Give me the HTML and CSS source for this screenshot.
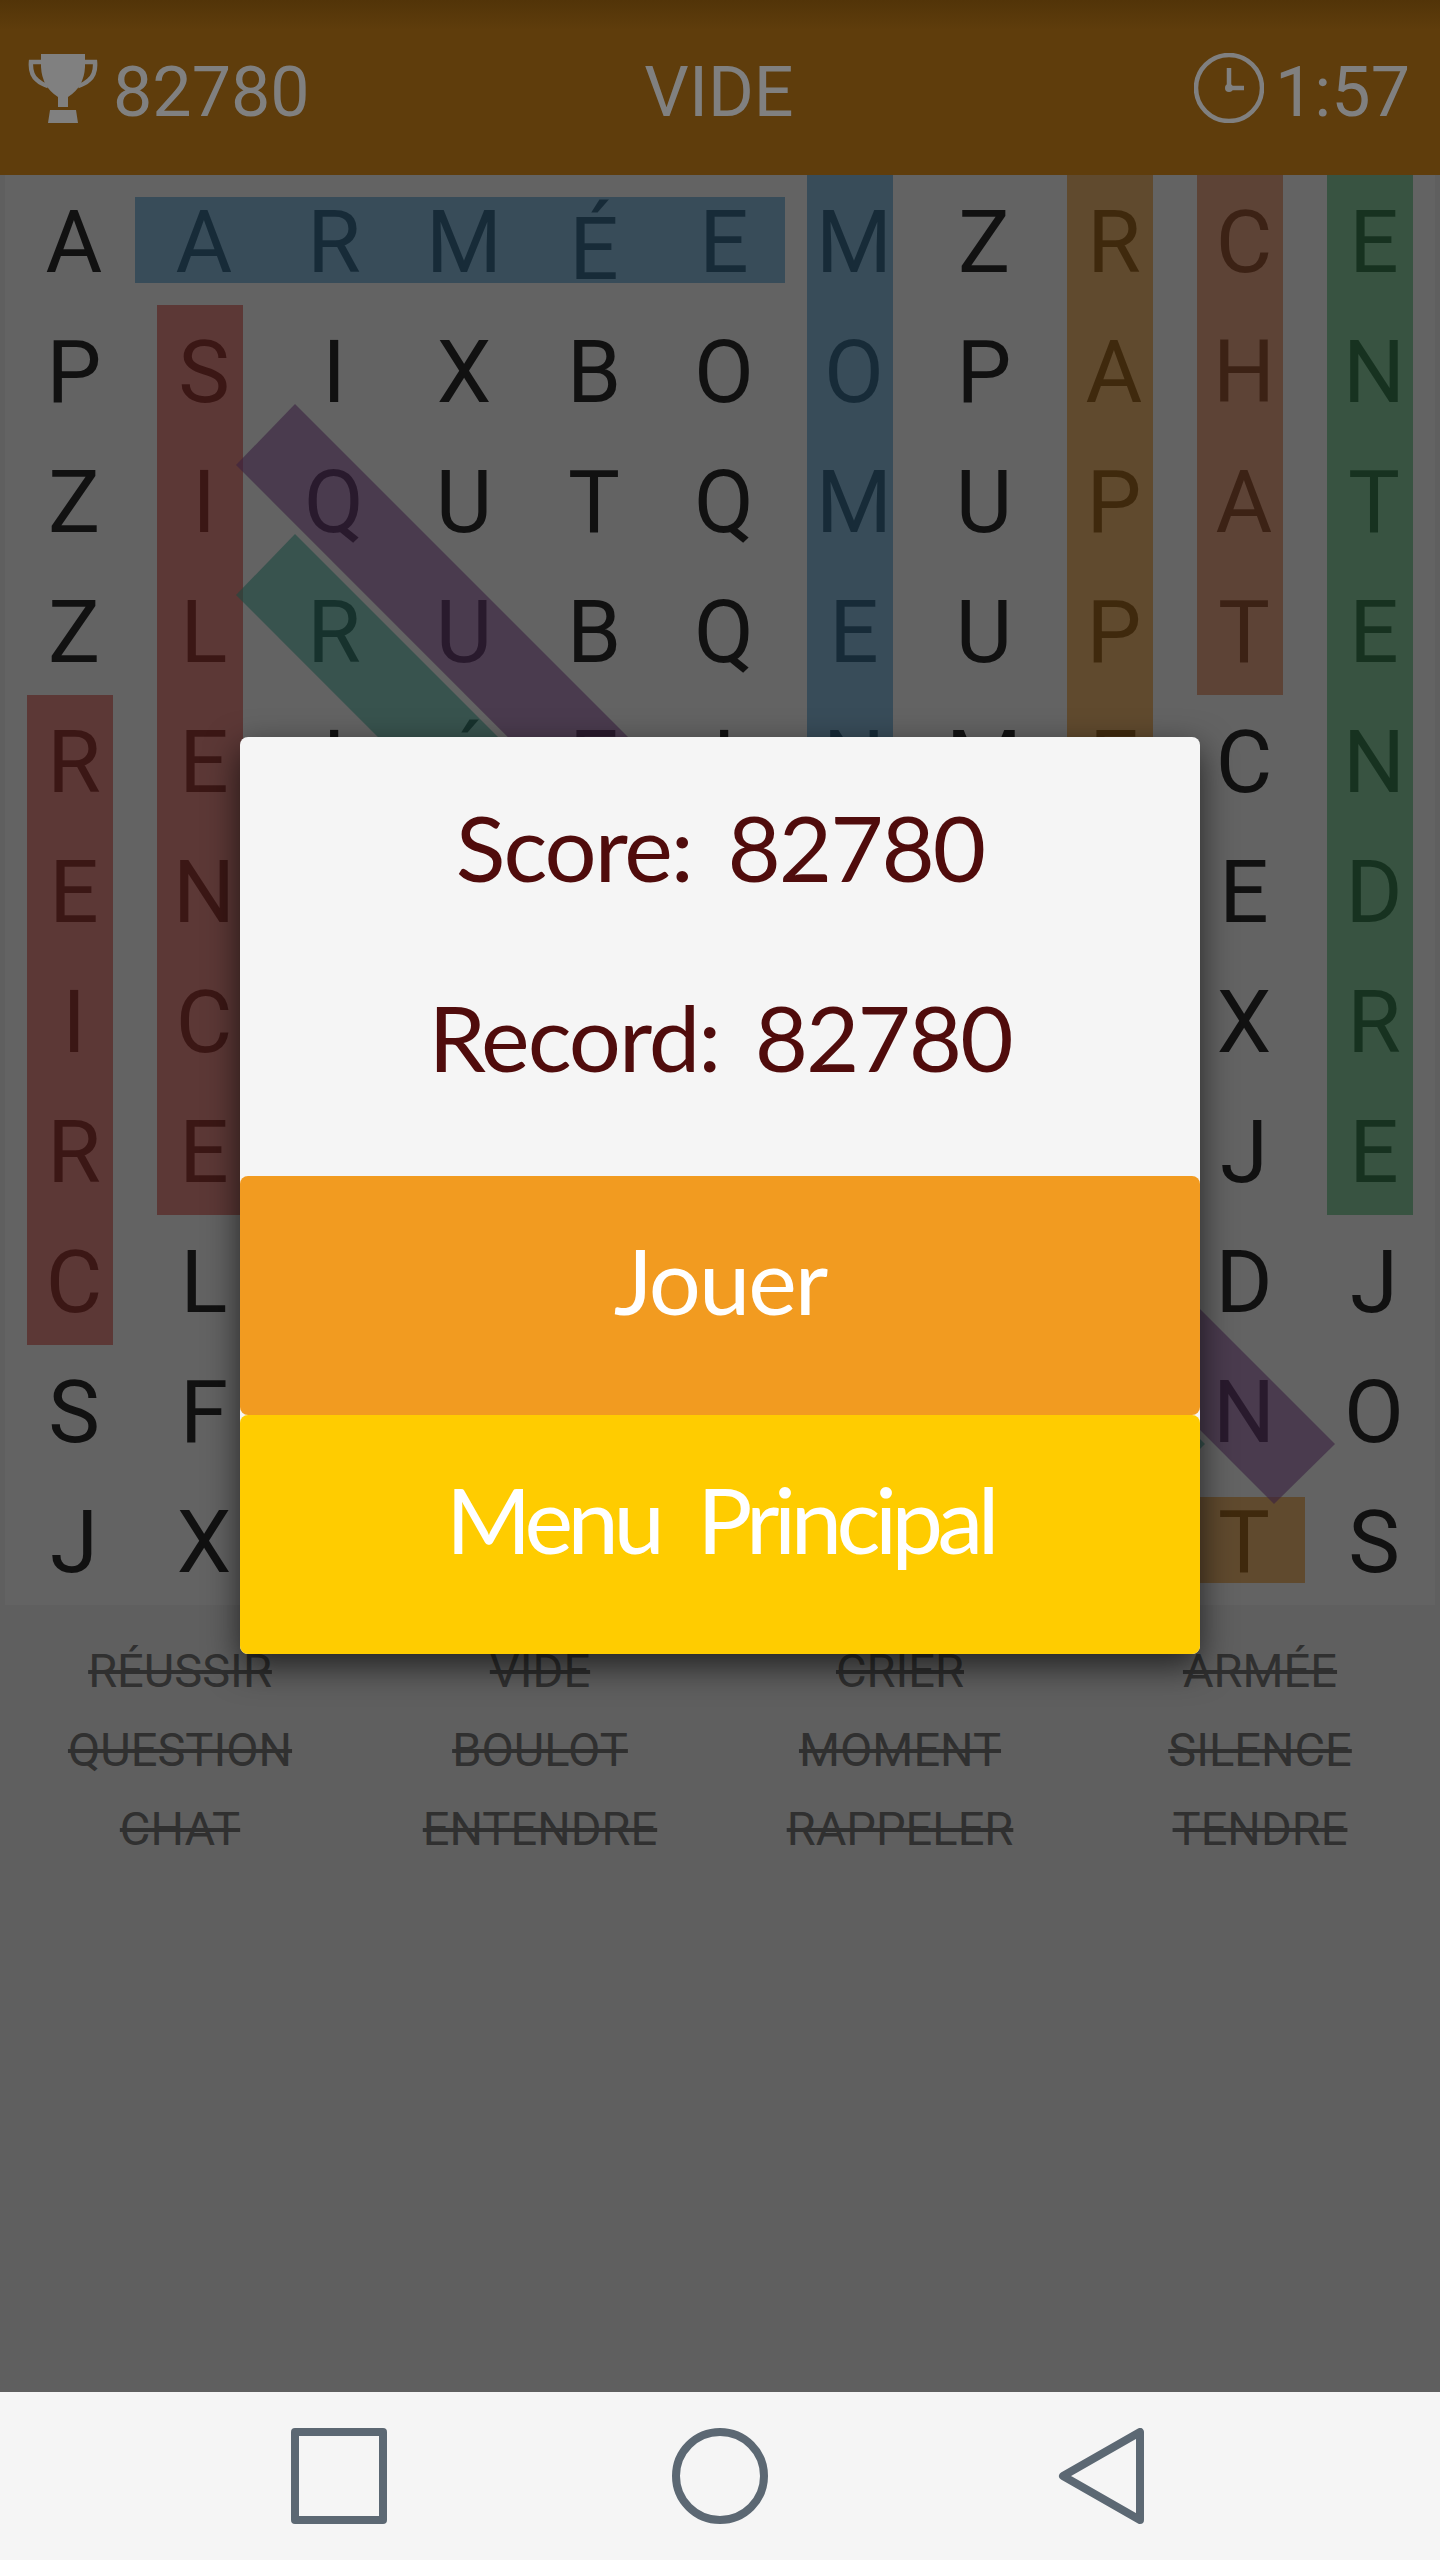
FILE: index.html
```html
<!DOCTYPE html>
<html lang="fr">
<head>
  <meta charset="UTF-8" />
  <title>Mots mêlés</title>
  <meta name="viewport" content="width=device-width, initial-scale=1.0" />
  <link rel="stylesheet" href="styles.css">
</head>
<body>
  <div class="ecran">
    <header class="entete">
      <div class="info">
        <svg class="icone" viewBox="0 0 70 70">
          <path class="anse" d="M14 9H3Q2 21 9 27 13 31 20 33M56 9H67Q68 21 61 27 57 31 50 33" />
          <path class="plein" d="M13 1H57V14Q56 34 40 44V54H30V44Q14 34 13 14ZM22 57H48L50 70H20Z" />
        </svg>
        <span>82780</span>
      </div>
      <div class="mot">VIDE</div>
      <div class="info droite">
        <svg class="icone" viewBox="0 0 70 70">
          <circle class="cadran" cx="35" cy="35" r="33" />
          <path class="aiguille" d="M35 15V35H50" />
          <circle class="plein" cx="35" cy="35" r="4" />
        </svg>
        <span>1:57</span>
      </div>
    </header>

    <section class="plateau">
      <div class="grille">
        <span>A</span><span>A</span><span>R</span><span>M</span><span class="accent">É</span><span>E</span><span>M</span><span>Z</span><span>R</span><span>C</span><span>E</span>
        <span>P</span><span>S</span><span>I</span><span>X</span><span>B</span><span>O</span><span>O</span><span>P</span><span>A</span><span>H</span><span>N</span>
        <span>Z</span><span>I</span><span>Q</span><span>U</span><span>T</span><span>Q</span><span>M</span><span>U</span><span>P</span><span>A</span><span>T</span>
        <span>Z</span><span>L</span><span>R</span><span>U</span><span>B</span><span>Q</span><span>E</span><span>U</span><span>P</span><span>T</span><span>E</span>
        <span>R</span><span>E</span><span>I</span><span class="accent">É</span><span>E</span><span>I</span><span>N</span><span>M</span><span>E</span><span>C</span><span>N</span>
        <span>E</span><span>N</span><span></span><span></span><span></span><span></span><span></span><span></span><span></span><span>E</span><span>D</span>
        <span>I</span><span>C</span><span></span><span></span><span></span><span></span><span></span><span></span><span></span><span>X</span><span>R</span>
        <span>R</span><span>E</span><span></span><span></span><span></span><span></span><span></span><span></span><span></span><span>J</span><span>E</span>
        <span>C</span><span>L</span><span></span><span></span><span></span><span></span><span></span><span></span><span></span><span>D</span><span>J</span>
        <span>S</span><span>F</span><span></span><span></span><span></span><span></span><span></span><span></span><span></span><span>N</span><span>O</span>
        <span>J</span><span>X</span><span></span><span></span><span></span><span></span><span></span><span></span><span></span><span>T</span><span>S</span>
      </div>
      <!-- mots trouves, coordonnees du plateau -->
      <svg class="traits" viewBox="0 0 1440 1430">
        <rect class="bleu" x="135" y="22" width="650" height="86" />
        <rect class="bleu" x="807" y="0" width="86" height="780" />
        <rect class="rouge" x="157" y="130" width="86" height="910" />
        <rect class="rouge" x="27" y="520" width="86" height="650" />
        <rect class="orange" x="1067" y="0" width="86" height="1040" />
        <rect class="orange" x="525" y="1322" width="780" height="86" />
        <rect class="brun" x="1197" y="0" width="86" height="520" />
        <rect class="vert" x="1327" y="0" width="86" height="1040" />
        <polygon class="violet" points="295,229 236,290 1274,1329 1335,1269" />
        <polygon class="turquoise" points="295,359 236,420 1144,1329 1205,1269" />
      </svg>
    </section>

    <ul class="mots">
      <li>RÉUSSIR</li><li>VIDE</li><li>CRIER</li><li>ARMÉE</li>
      <li>QUESTION</li><li>BOULOT</li><li>MOMENT</li><li>SILENCE</li>
      <li>CHAT</li><li>ENTENDRE</li><li>RAPPELER</li><li>TENDRE</li>
    </ul>

    <nav class="barre">
      <svg viewBox="0 0 96 96"><rect x="4" y="4" width="88" height="88" /></svg>
      <svg viewBox="0 0 96 96"><circle cx="48" cy="48" r="44" /></svg>
      <svg viewBox="0 0 96 96"><path d="M87 4V92L10 48Z" /></svg>
    </nav>
  </div>

  <div class="fond">
    <div class="dialogue">
      <div class="scores">
        <p>Score: 82780</p>
        <p>Record: 82780</p>
      </div>
      <button class="btn jouer">Jouer</button>
      <button class="btn menu">Menu Principal</button>
    </div>
  </div>
</body>
</html>
```

FILE: styles.css
```css
* {
  box-sizing: border-box;
  margin: 0;
  padding: 0;
}

body {
  font-family: Roboto, sans-serif;
  background: #5f5f5f;
  position: relative;
}

.ecran {
  display: flex;
  flex-direction: column;
  min-height: 2560px;
}

/* entete */
.entete {
  display: grid;
  grid-template-columns: 1fr auto 1fr;
  align-items: center;
  height: 175px;
  padding: 8px 30px 0 28px;
  font-size: 70px;
  color: #808080;
  background: linear-gradient(#523408, #5f3d0c 30px);
}

.info {
  display: flex;
  align-items: center;
  gap: 15px;
}

.droite {
  justify-content: flex-end;
  gap: 11px;
}

.icone {
  width: 70px;
  height: 70px;
  margin-top: -8px;
}

.plein {
  fill: #808080;
}

.anse,
.cadran,
.aiguille {
  fill: none;
  stroke: #808080;
  stroke-width: 4.5;
}

/* plateau */
.plateau {
  position: relative;
  padding: 0 5px;
}

.grille {
  display: grid;
  grid-template-columns: repeat(11, 130px);
  grid-auto-rows: 130px;
  background: #636363;
  font-size: 87px;
  color: #111;
}

.grille span {
  display: flex;
  align-items: center;
  justify-content: center;
  padding: 3px 0 0 8px;
}

/* la lettre est centree avec son accent */
.grille .accent {
  padding-top: 18px;
}

.traits {
  position: absolute;
  top: 0;
  left: 0;
  width: 1440px;
  height: 1430px;
}

.bleu { fill: rgba(29, 62, 84, 0.6); }
.rouge { fill: rgba(89, 29, 25, 0.6); }
.orange { fill: rgba(95, 58, 12, 0.6); }
.brun { fill: rgba(90, 47, 25, 0.6); }
.vert { fill: rgba(29, 74, 44, 0.6); }
.violet { fill: rgba(59, 34, 65, 0.6); }
.turquoise { fill: rgba(29, 74, 65, 0.6); }

/* liste des mots */
.mots {
  display: grid;
  grid-template-columns: repeat(4, 360px);
  grid-auto-rows: 79px;
  padding-top: 38px;
  list-style: none;
  font-size: 47px;
  color: #303030;
  text-align: center;
  text-decoration: line-through;
}

/* barre android */
.barre {
  display: flex;
  justify-content: center;
  align-items: center;
  gap: 285px;
  height: 168px;
  margin-top: auto;
  background: #f5f5f5;
}

.barre svg {
  width: 96px;
  height: 96px;
  fill: none;
  stroke: #5c6873;
  stroke-width: 8;
  stroke-linejoin: round;
}

/* dialogue de fin */
.fond {
  position: absolute;
  top: 0;
  left: 0;
  width: 100%;
  height: 2391px;
  display: flex;
  align-items: center;
  justify-content: center;
}

.dialogue {
  display: flex;
  flex-direction: column;
  width: 960px;
  background: #f5f5f5;
  border-radius: 8px;
  box-shadow: 0 12px 34px rgba(0, 0, 0, 0.65);
  font-family: Lato, sans-serif;
}

.scores {
  height: 439px;
  padding-top: 15px;
  color: #500c0c;
  font-size: 92px;
  line-height: 190px;
  letter-spacing: -2px;
  text-align: center;
  word-spacing: 14px;
}

.btn {
  display: block;
  height: 239px;
  padding-bottom: 32px;
  border: none;
  border-radius: 8px;
  color: #fff;
  font: inherit;
  font-size: 92px;
  letter-spacing: -2px;
}

.jouer {
  background: #f29b20;
}

.menu {
  background: #ffcc00;
  letter-spacing: -5.5px;
  word-spacing: 20px;
}
```
